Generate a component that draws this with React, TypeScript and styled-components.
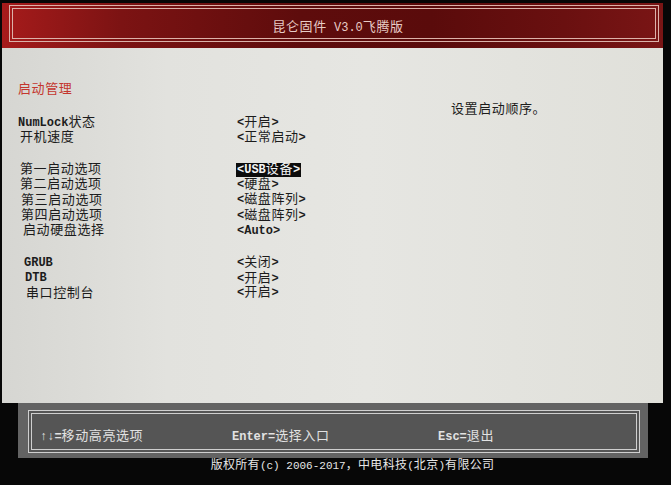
import styled, { createGlobalStyle } from "styled-components";

const GlobalStyle = createGlobalStyle`
  html, body {
    margin: 0;
    padding: 0;
    background: #070707;
    width: 671px;
    height: 485px;
    overflow: hidden;
  }
  * {
    box-sizing: border-box;
  }
`;

// mono first so the line boxes stay tight, cjk glyphs fall back to noto
const FONT = `"Liberation Mono", "Noto Sans CJK SC", monospace`;

// latin runs of the bios font are narrow and heavy, cjk glyphs wide
const Latin = styled.span<{ $size?: number }>`
  font-weight: bold;
  letter-spacing: 0;
  font-size: ${(p) => p.$size ?? 12}px;
`;

function Mixed({ text, size }: { text: string; size?: number }) {
  const parts = text.split(/([\x20-\x7E↑↓]+)/).filter(Boolean);
  return (
    <>
      {parts.map((p, i) =>
        /^[\x20-\x7E↑↓]+$/.test(p) ? (
          <Latin key={i} $size={size}>
            {p}
          </Latin>
        ) : (
          <span key={i}>{p}</span>
        )
      )}
    </>
  );
}

const Screen = styled.div`
  width: 661px;
  margin-left: 2px;
  padding-top: 3px;
  display: flex;
  flex-direction: column;
  font-family: ${FONT};
  font-size: 13px;
  letter-spacing: 0.6px;
`;

const Header = styled.header`
  height: 45px;
  padding: 2px 4px 6px 7px;
  background: linear-gradient(
    90deg,
    #a61b1b 0%,
    #7c1313 18%,
    #5e0c0c 45%,
    #5a0b0b 65%,
    #6a1010 85%,
    #7a1515 100%
  );
`;

const HeaderFrame = styled.div`
  height: 100%;
  border: 4px double #dcb2aa;
  display: flex;
  align-items: center;
  justify-content: center;
  padding: 8px 0 0 8px;
`;

const Title = styled.h1`
  margin: 0;
  font-size: 13px;
  font-weight: normal;
  line-height: 16px;
  color: #e8ccc6;
  ${Latin} {
    font-weight: normal;
  }
`;

const Body = styled.main`
  height: 355px;
  display: flex;
  background: linear-gradient(
    90deg,
    #d6d6d2 0%,
    #e2e2de 25%,
    #e6e6e2 55%,
    #e0e0da 100%
  );
`;

const MainPanel = styled.section`
  width: 442px;
  padding: 34px 0 0 16px;
  display: flex;
  flex-direction: column;
`;

const SectionTitle = styled.h2`
  margin: 0 0 17px;
  font-size: 13px;
  font-weight: normal;
  line-height: 16px;
  color: #c4362e;
`;

const Group = styled.div`
  display: flex;
  flex-direction: column;
  & + & {
    margin-top: 16.5px;
  }
`;

const Row = styled.div`
  display: grid;
  grid-template-columns: 218px auto;
  height: 15.3px;
  line-height: 15.3px;
  align-items: center;
  color: #1c1c1c;
`;

const Label = styled.span<{ $indent?: number }>`
  padding-left: ${(p) => p.$indent ?? 0}px;
  white-space: nowrap;
`;

const Value = styled.span<{ $selected?: boolean }>`
  justify-self: start;
  white-space: nowrap;
  padding: 0 1px;
  line-height: 14px;
  background: ${(p) => (p.$selected ? "#0c0c0c" : "transparent")};
  color: ${(p) => (p.$selected ? "#f4f4f4" : "#1c1c1c")};
`;

const HelpPanel = styled.aside`
  flex: 1;
  padding: 54px 0 0 7px;
  color: #1c1c1c;
  line-height: 16px;
`;

const Footer = styled.footer`
  height: 55px;
  margin: 0 15px 0 16px;
  padding: 7px 8px 5px 10px;
  background: #636363;
`;

const FooterFrame = styled.div`
  height: 100%;
  border: 4px double #cfcfcf;
  background: #555555;
  display: grid;
  grid-template-columns: 192px 206px auto;
  align-items: center;
  padding: 6px 0 0 8px;
`;

const Hint = styled.span`
  color: #e2e2e2;
  white-space: nowrap;
`;

const Copyright = styled.div`
  padding-left: 40px;
  text-align: center;
  font-size: 12px;
  letter-spacing: 0.3px;
  color: #e6e6e6;
  line-height: 16px;
  white-space: nowrap;
  ${Latin} {
    font-weight: normal;
  }
`;

type Item = { label: string; value: string; selected?: boolean; indent?: number };

const groups: Item[][] = [
  [
    { label: "NumLock状态", value: "<开启>" },
    { label: "开机速度", value: "<正常启动>", indent: 2 },
  ],
  [
    { label: "第一启动选项", value: "<USB设备>", selected: true, indent: 2 },
    { label: "第二启动选项", value: "<硬盘>", indent: 2 },
    { label: "第三启动选项", value: "<磁盘阵列>", indent: 3 },
    { label: "第四启动选项", value: "<磁盘阵列>", indent: 3 },
    { label: "启动硬盘选择", value: "<Auto>", indent: 5 },
  ],
  [
    { label: "GRUB", value: "<关闭>", indent: 6 },
    { label: "DTB", value: "<开启>", indent: 7 },
    { label: "串口控制台", value: "<开启>", indent: 8 },
  ],
];

const hints = ["↑↓=移动高亮选项", "Enter=选择入口", "Esc=退出"];

function App() {
  return (
    <>
      <GlobalStyle />
      <Screen>
        <Header>
          <HeaderFrame>
            <Title>
              <Mixed text="昆仑固件 V3.0飞腾版" />
            </Title>
          </HeaderFrame>
        </Header>
        <Body>
          <MainPanel>
            <SectionTitle>启动管理</SectionTitle>
            {groups.map((g, i) => (
              <Group key={i}>
                {g.map((it) => (
                  <Row key={it.label}>
                    <Label $indent={it.indent}>
                      <Mixed text={it.label} />
                    </Label>
                    <Value $selected={it.selected}>
                      <Mixed text={it.value} />
                    </Value>
                  </Row>
                ))}
              </Group>
            ))}
          </MainPanel>
          <HelpPanel>设置启动顺序。</HelpPanel>
        </Body>
        <Footer>
          <FooterFrame>
            {hints.map((h) => (
              <Hint key={h}>
                <Mixed text={h} />
              </Hint>
            ))}
          </FooterFrame>
        </Footer>
        <Copyright>
          <Mixed text="版权所有(c) 2006-2017，中电科技(北京)有限公司" size={11} />
        </Copyright>
      </Screen>
    </>
  );
}

export default App;
